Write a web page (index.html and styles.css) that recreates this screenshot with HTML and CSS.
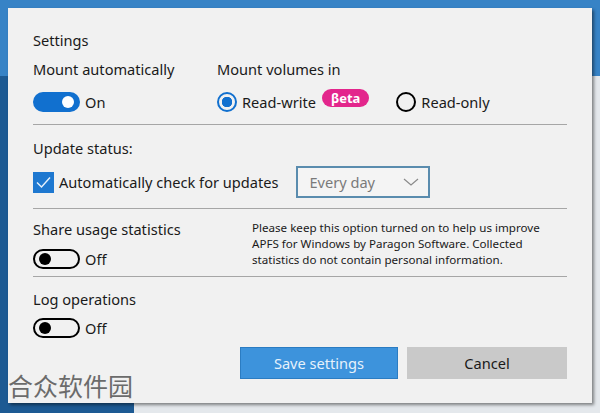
FILE: index.html
```html
<!DOCTYPE html>
<html lang="en">
<head>
    <meta charset="UTF-8">
    <title>Settings</title>
    <link rel="stylesheet" href="styles.css">
</head>
<body>
    <div class="dialog">
        <div class="title">Settings</div>

        <div class="mount">
            <div class="col col-auto">
                <div class="label">Mount automatically</div>
                <div class="control-row">
                    <span class="toggle on"><span class="knob"></span></span>
                    <span class="ctl-text">On</span>
                </div>
            </div>
            <div class="col">
                <div class="label">Mount volumes in</div>
                <div class="control-row">
                    <span class="radio checked"></span>
                    <span class="ctl-text">Read-write</span>
                    <span class="beta">βeta</span>
                    <span class="radio second"></span>
                    <span class="ctl-text">Read-only</span>
                </div>
            </div>
        </div>

        <div class="divider"></div>

        <div class="label update-label">Update status:</div>
        <div class="update-row">
            <span class="checkbox">
                <svg width="21" height="21" viewBox="0 0 21 21"><path d="M4 10.5 L8.5 15 L17 5.5" fill="none" stroke="#e8f2fc" stroke-width="1.4"/></svg>
            </span>
            <span class="ctl-text">Automatically check for updates</span>
            <div class="select">
                <span>Every day</span>
                <svg width="16" height="10" viewBox="0 0 16 10"><path d="M1 2 L8 8 L15 2" fill="none" stroke="#8a8a8a" stroke-width="1.2"/></svg>
            </div>
        </div>

        <div class="divider div-update"></div>

        <div class="share">
            <div class="share-left">
                <div class="label">Share usage statistics</div>
                <div class="control-row">
                    <span class="toggle off"><span class="knob"></span></span>
                    <span class="ctl-text">Off</span>
                </div>
            </div>
            <p class="note">Please keep this option turned on to help us improve APFS for Windows by Paragon Software. Collected statistics do not contain personal information.</p>
        </div>

        <div class="divider div-share"></div>

        <div class="label log-label">Log operations</div>
        <div class="control-row log-row">
            <span class="toggle off"><span class="knob"></span></span>
            <span class="ctl-text">Off</span>
        </div>

        <div class="buttons">
            <button class="btn save">Save settings</button>
            <button class="btn cancel">Cancel</button>
        </div>

        <div class="watermark">合众软件园</div>
    </div>
</body>
</html>
```

FILE: styles.css
```css
body {
    margin: 0;
    width: 600px;
    height: 413px;
    overflow: hidden;
    font-family: "Segoe UI", "Noto Sans", sans-serif;
    color: #1a1a1a;
    background:
        linear-gradient(#3783c6, #3783c6) top / 100% 76px no-repeat,
        linear-gradient(#1d5a93, #1d5a93) left / 134px 100% no-repeat,
        #e4e8ec;
}

.dialog {
    position: relative;
    margin: 8px;
    width: 584px;
    height: 395px;
    box-sizing: border-box;
    padding: 22px 25px 0 25px;
    background: #f1f1f1;
    box-shadow: 2px 2px 3px rgba(0, 0, 0, 0.45);
    font-size: 14.6px;
}

.title,
.label {
    line-height: 20px;
    height: 20px;
    white-space: nowrap;
}

.mount {
    display: flex;
    margin-top: 9px;
}

.col-auto {
    width: 184px;
}

.control-row {
    display: flex;
    align-items: center;
    height: 22px;
    margin-top: 12px;
}

.ctl-text {
    margin-left: 5px;
    line-height: 20px;
    white-space: nowrap;
}

.toggle {
    position: relative;
    width: 47px;
    height: 20px;
    box-sizing: border-box;
    border-radius: 10px;
}

.toggle .knob {
    position: absolute;
    top: 4px;
    width: 12px;
    height: 12px;
    border-radius: 50%;
}

.toggle.on {
    background: #1170cf;
}

.toggle.on .knob {
    right: 6px;
    top: 4px;
    background: #fff;
}

.toggle.off {
    border: 2px solid #000;
}

.toggle.off .knob {
    left: 4px;
    top: 2px;
    width: 12px;
    height: 12px;
    background: #000;
}

.radio {
    width: 20px;
    height: 20px;
    box-sizing: border-box;
    border-radius: 50%;
    border: 2px solid #000;
}

.radio.checked {
    border-color: #1170cf;
    background: radial-gradient(circle, #1170cf 0 5px, transparent 5.5px);
}

.radio.second {
    margin-left: 27px;
}

.beta {
    margin: 0 0 8px 6px;
    padding: 0 9px;
    height: 18px;
    line-height: 18px;
    border-radius: 9px;
    background: #e3268c;
    color: #fff;
    font-size: 13px;
    font-weight: bold;
}

.divider {
    height: 1px;
    background: #a6a6a6;
    margin-top: 11px;
}

.update-label {
    margin-top: 13px;
}

.update-row {
    display: flex;
    align-items: center;
    height: 32px;
    margin-top: 8px;
}

.checkbox {
    width: 21px;
    height: 21px;
    background: #1e78d0;
}

.checkbox svg {
    display: block;
}

.select {
    display: flex;
    align-items: center;
    justify-content: space-between;
    margin-left: 18px;
    width: 134px;
    height: 32px;
    box-sizing: border-box;
    padding: 0 9px 0 11px;
    border: 2px solid #5a8cae;
    background: #f4f4f4;
    color: #7a7a7a;
}

.div-update {
    margin-top: 10px;
}

.share {
    display: flex;
    margin-top: 10px;
}

.share-left {
    width: 219px;
}

.share-left .control-row {
    margin-top: 9px;
}

.note {
    margin: 1px 0 0 0;
    width: 300px;
    font-size: 11.6px;
    line-height: 16px;
    color: #1a1a1a;
}

.div-share {
    margin-top: 6px;
}

.log-label {
    margin-top: 12px;
}

.log-row {
    margin-top: 8px;
}

.buttons {
    display: flex;
    justify-content: flex-end;
    gap: 9px;
    margin-top: 8px;
}

.btn {
    height: 32px;
    border: none;
    font-family: "Segoe UI", "Noto Sans", sans-serif;
    font-size: 14.6px;
}

.btn.save {
    width: 158px;
    background: #3d93dc;
    color: #e6f1fb;
    box-shadow: inset 0 0 0 1px #2b7cc2;
}

.btn.cancel {
    width: 160px;
    background: #c9c9c9;
    color: #1a1a1a;
}

.watermark {
    position: absolute;
    left: 0;
    bottom: 4px;
    font-family: "Noto Sans CJK SC", sans-serif;
    font-size: 25px;
    line-height: 28px;
    color: #6b6b6b;
}
```
